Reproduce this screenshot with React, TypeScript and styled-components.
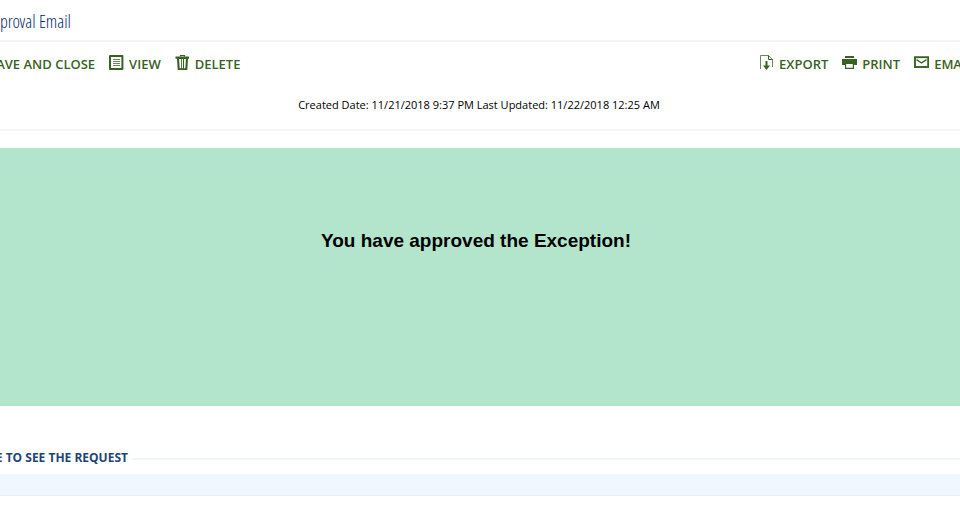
import React from "react";
import styled, { createGlobalStyle } from "styled-components";

const GlobalStyle = createGlobalStyle`
  *, *::before, *::after { box-sizing: border-box; }
  body {
    margin: 0;
    background: #fff;
    color: #000;
    font-family: "Open Sans", "Noto Sans", sans-serif;
    overflow-x: hidden;
  }
`;

const Page = styled.main`
  overflow: hidden;
`;

const TitleBar = styled.header`
  height: 42px;
  border-bottom: 2px solid #f0f6fc;
  display: flex;
  align-items: center;
`;

const Title = styled.h1`
  margin: 2px 0 0 -15px;
  font-family: "Open Sans Condensed Light", "Open Sans Condensed", "Liberation Sans Narrow", sans-serif;
  font-size: 18px;
  line-height: 24px;
  font-weight: 300;
  color: #04296a;
  white-space: nowrap;
`;

const Toolbar = styled.nav`
  display: flex;
  justify-content: space-between;
  height: 44px;
  align-items: center;
  margin: 0 -13px 0 -31px;
`;

const Group = styled.div`
  display: flex;
  gap: 14px;
`;

const ToolButton = styled.button`
  display: flex;
  align-items: center;
  gap: 5px;
  padding: 0;
  border: 0;
  background: none;
  color: #3a6124;
  font: 600 13px/20px "Open Sans", "Noto Sans", sans-serif;
  white-space: nowrap;
  cursor: pointer;

  svg {
    flex: none;
    margin-bottom: 4px;
  }
`;

const Dates = styled.p`
  margin: 0;
  padding: 11px 2px 16px 0;
  border-bottom: 2px solid #f0f6fc;
  text-align: center;
  font-size: 11px;
  line-height: 16px;
`;

const Banner = styled.section`
  margin-top: 17px;
  padding: 81px 8px 153px 0;
  background: #b3e5cc;
  text-align: center;
`;

const Message = styled.h2`
  margin: 0;
  font: bold 19px/24px "Liberation Sans", Arial, sans-serif;
`;

const SectionHead = styled.div`
  display: flex;
  align-items: center;
  gap: 3px;
  margin: 43px 0 7px -28px;

  &::after {
    content: "";
    flex: 1;
    height: 2px;
    margin-top: 2px;
    background: #f0f6fc;
  }
`;

const SectionTitle = styled.h3`
  margin: 0;
  font-size: 12px;
  line-height: 18px;
  font-weight: 700;
  color: #1d4477;
  white-space: nowrap;
`;

const Strip = styled.div`
  height: 22px;
  background: #f0f7fe;
  border-bottom: 1px solid #e3f0f8;
`;

const Icon = ({ children }: { children: React.ReactNode }) => (
  <svg width="15" height="16" viewBox="0 0 15 16" fill="none" stroke="currentColor" aria-hidden="true">
    {children}
  </svg>
);

const SaveIcon = () => (
  <Icon>
    <path d="M1 2h10l3 3v9H1zM4 2v4h6V2M4 14V9h7v5" strokeWidth="2" />
  </Icon>
);

const ViewIcon = () => (
  <Icon>
    <rect x="1" y="2" width="12.4" height="13" strokeWidth="2" strokeLinejoin="round" />
    <path d="M4 5.5h7M4 7.5h7M4 9.5h7M4 11.5h7" strokeWidth="1" opacity=".75" />
  </Icon>
);

const TrashIcon = () => (
  <Icon>
    <path d="M5.5 2.5v-1h4v1" strokeWidth="1.2" />
    <path
      d="M.5 2.5h13.5v2.3h-1L12.3 16H2.7L2 4.8H.5zM4.1 5l.6 9.2h1.5V5zM7 5v9.2h1V5zM9 5v9.2h1.3l.6-9.2z"
      fill="currentColor"
      fillRule="evenodd"
      stroke="none"
    />
  </Icon>
);

const ExportIcon = () => (
  <Icon>
    <path d="M1.5 15V1.5h8l4 4V13" strokeWidth="1" opacity=".75" />
    <path d="M9.5 1.5v4h4" strokeWidth="1" />
    <path d="M6.5 7h2v4.5H11L7.5 16 4 11.5h2.5z" fill="currentColor" stroke="none" />
  </Icon>
);

const PrintIcon = () => (
  <Icon>
    <path d="M3 2h9v2H3zM0 5h15v6h-3V9H3v2H0z" fill="currentColor" stroke="none" />
    <path d="M3.6 8.5h7.8v5.9H3.6z" fill="#fff" strokeWidth="1.2" />
    <path d="M3 7h9v3H3z" fill="currentColor" stroke="none" />
  </Icon>
);

const MailIcon = () => (
  <Icon>
    <rect x="1" y="3.2" width="13.2" height="9.8" strokeWidth="1.9" />
    <path d="M2.5 5.6l5 3.4 5-3.4" strokeWidth="1.3" />
  </Icon>
);

export default function App() {
  return (
    <>
      <GlobalStyle />
      <Page>
        <TitleBar>
          <Title>Approval Email</Title>
        </TitleBar>
        <Toolbar aria-label="Record actions">
          <Group>
            <ToolButton><SaveIcon />SAVE AND CLOSE</ToolButton>
            <ToolButton><ViewIcon />VIEW</ToolButton>
            <ToolButton><TrashIcon />DELETE</ToolButton>
          </Group>
          <Group>
            <ToolButton><ExportIcon />EXPORT</ToolButton>
            <ToolButton><PrintIcon />PRINT</ToolButton>
            <ToolButton><MailIcon />EMAIL</ToolButton>
          </Group>
        </Toolbar>
        <Dates>Created Date: 11/21/2018 9:37 PM Last Updated: 11/22/2018 12:25 AM</Dates>
        <Banner>
          <Message>You have approved the Exception!</Message>
        </Banner>
        <SectionHead>
          <SectionTitle>HERE TO SEE THE REQUEST</SectionTitle>
        </SectionHead>
        <Strip />
      </Page>
    </>
  );
}
